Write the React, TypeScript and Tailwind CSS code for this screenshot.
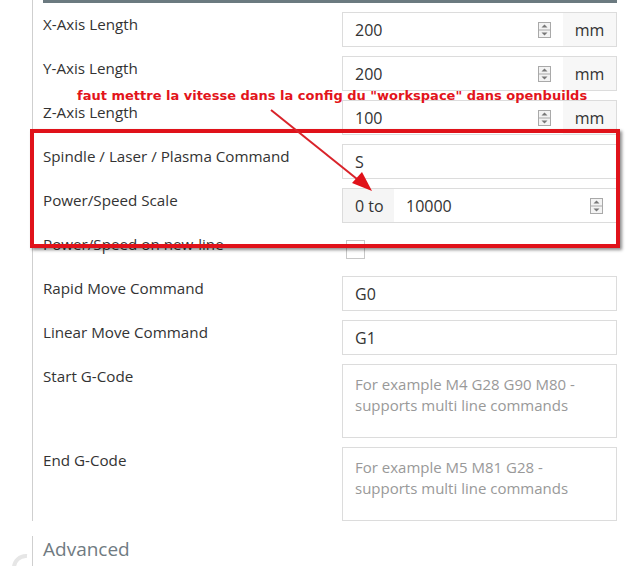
import React from 'react'

const Spinner: React.FC = () => (
  <svg width="13" height="16" viewBox="0 0 13 16" className="shrink-0">
    <rect x="0.5" y="0.5" width="12" height="15" fill="#f3f3f3" stroke="#a9a9a9" />
    <line x1="1" y1="8" x2="12" y2="8" stroke="#a9a9a9" />
    <path d="M3.5 5.5 L6.5 2.5 L9.5 5.5 Z" fill="#777" />
    <path d="M3.5 10.5 L6.5 13.5 L9.5 10.5 Z" fill="#777" />
  </svg>
)

const Label: React.FC<{ text: string }> = ({ text }) => (
  <div className="h-6 leading-6 text-[15.2px] text-[#333]">{text}</div>
)

const NumberInput: React.FC<{ value: string }> = ({ value }) => (
  <div className="flex h-[35px] w-[275px] border border-[#dcdcdc]">
    <div className="flex flex-1 items-center justify-between bg-white pl-3 pr-3">
      <span className="text-[16px] text-[#333]">{value}</span>
      <Spinner />
    </div>
    <div className="flex w-[53px] items-center justify-center bg-[#f7f7f7] text-[16px] text-[#333]">mm</div>
  </div>
)

const TextInput: React.FC<{ value: string }> = ({ value }) => (
  <div className="flex h-[35px] w-[275px] items-center border border-[#dcdcdc] bg-white pl-3 text-[16px] text-[#333]">
    {value}
  </div>
)

const TextArea: React.FC<{ placeholder: string }> = ({ placeholder }) => (
  <div className="h-[74px] w-[275px] border border-[#dcdcdc] bg-white px-3 pt-[9px] text-[15px] leading-[21px] text-[#999]">
    {placeholder}
  </div>
)

const Row: React.FC<{ label: string; children: React.ReactNode }> = ({ label, children }) => (
  <div className="flex pb-[9px]">
    <div className="w-[299px]">
      <Label text={label} />
    </div>
    {children}
  </div>
)

export default function App() {
  return (
    <div
      className="relative h-[566px] w-[642px] overflow-hidden bg-white"
      style={{ fontFamily: '"Open Sans", "Noto Sans", sans-serif' }}
    >
      <div className="ml-8 w-[585px] border-l border-[#cfcfcf] pl-[10px]">
        <div className="h-[3px] w-[574px] bg-[#6b7a80]" />
        <div className="pt-[9px]">
          <Row label="X-Axis Length">
            <NumberInput value="200" />
          </Row>
          <Row label="Y-Axis Length">
            <NumberInput value="200" />
          </Row>
          <Row label="Z-Axis Length">
            <NumberInput value="100" />
          </Row>
          <Row label="Spindle / Laser / Plasma Command">
            <TextInput value="S" />
          </Row>
          <Row label="Power/Speed Scale">
            <div className="flex h-[35px] w-[275px] border border-[#dcdcdc]">
              <div className="flex w-[51px] items-center bg-[#f5f5f5] pl-3 text-[16px] text-[#333]">0 to</div>
              <div className="flex flex-1 items-center justify-between bg-white pl-3 pr-[13px]">
                <span className="text-[16px] text-[#333]">10000</span>
                <Spinner />
              </div>
            </div>
          </Row>
          <Row label="Power/Speed on new-line">
            <div className="flex h-[35px] items-center pl-1">
              <div className="h-[19px] w-[19px] border border-[#c8c8c8] bg-white" />
            </div>
          </Row>
          <Row label="Rapid Move Command">
            <TextInput value="G0" />
          </Row>
          <Row label="Linear Move Command">
            <TextInput value="G1" />
          </Row>
          <Row label="Start G-Code">
            <TextArea placeholder="For example M4 G28 G90 M80 - supports multi line commands" />
          </Row>
          <div className="flex">
            <div className="w-[299px] pt-[1px]">
              <Label text="End G-Code" />
            </div>
            <TextArea placeholder="For example M5 M81 G28 - supports multi line commands" />
          </div>
        </div>
      </div>

      <div className="mt-[15px] flex">
        <div className="relative w-8">
          <svg width="32" height="40" viewBox="0 0 32 40" className="absolute left-0 top-0">
            <path d="M27 20 A12 12 0 0 0 14 32 L14 40" fill="none" stroke="#e6e6e6" strokeWidth="4" />
          </svg>
        </div>
        <div className="border-l border-[#cfcfcf] pl-[10px]">
          <div className="text-[19px] leading-[26px] text-[#707b82]">Advanced</div>
          <div className="text-[13px] leading-[18px] text-[#333]">Choose application behavior to suit your specific needs</div>
        </div>
      </div>

      {/* annotation overlay */}
      <div className="pointer-events-none absolute inset-0">
        <div
          className="absolute left-[77px] top-[87px] whitespace-nowrap text-[13px] font-bold leading-[18px] text-[#e3141b]"
          style={{ fontFamily: '"DejaVu Sans", Verdana, sans-serif' }}
        >
          faut mettre la vitesse dans la config du "workspace" dans openbuilds
        </div>
        <div className="absolute left-[30px] top-[129px] h-[119px] w-[590px] border-[4px] border-[#e0121a] shadow-[2px_2px_3px_rgba(0,0,0,0.45)]" />
        <svg className="absolute left-0 top-0" width="642" height="566" viewBox="0 0 642 566">
          <line x1="271" y1="110" x2="362" y2="183" stroke="#d9232a" strokeWidth="2" />
          <path d="M372 191 L352 183 L362 172 Z" fill="#e0121a" />
        </svg>
      </div>
    </div>
  )
}
